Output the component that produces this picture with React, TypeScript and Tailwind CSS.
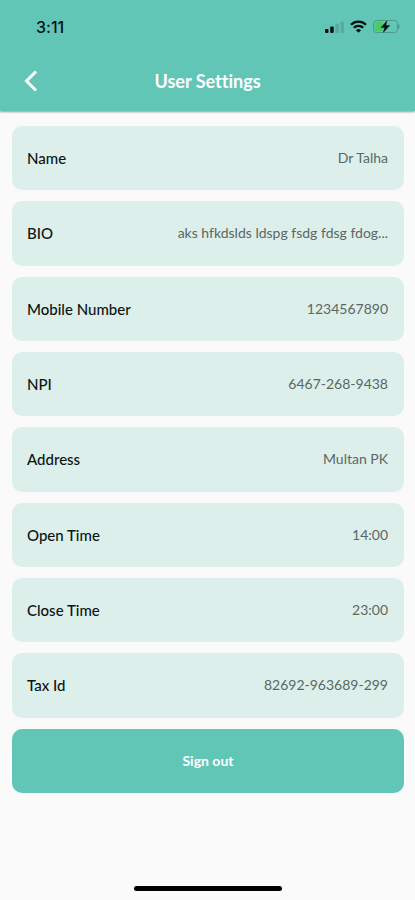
const settings = [
  { label: "Name", value: "Dr Talha" },
  { label: "BIO", value: "aks hfkdslds ldspg fsdg fdsg fdog..." },
  { label: "Mobile Number", value: "1234567890" },
  { label: "NPI", value: "6467-268-9438" },
  { label: "Address", value: "Multan PK" },
  { label: "Open Time", value: "14:00" },
  { label: "Close Time", value: "23:00" },
  { label: "Tax Id", value: "82692-963689-299" },
];

function SignalIcon() {
  return (
    <svg width="19" height="12" viewBox="0 0 19 12" aria-hidden="true">
      <rect x="0" y="8" width="3.500" height="4" rx="1" fill="#06110f" />
      <rect x="5.200" y="5.500" width="3.500" height="6.500" rx="1" fill="#06110f" />
      <rect x="10.400" y="2.800" width="3.500" height="9.200" rx="1" fill="#55ab9e" />
      <rect x="15.500" y="0.500" width="3.300" height="11.500" rx="1" fill="#55ab9e" />
    </svg>
  );
}

function WifiIcon() {
  return (
    <svg width="17" height="13" viewBox="0 0 17 13" aria-hidden="true">
      <g fill="none" stroke="#06110f" strokeWidth="2.300">
        <path d="M1 4.700a10.600 10.600 0 0 1 15 0" />
        <path d="M3.800 7.800a6.600 6.600 0 0 1 9.400 0" />
      </g>
      <path d="M8.500 12.800 5.900 10.200a3.700 3.700 0 0 1 5.200 0z" fill="#06110f" />
    </svg>
  );
}

function BatteryIcon() {
  return (
    <svg width="27" height="13" viewBox="0 0 27 13" aria-hidden="true">
      <rect x="0.500" y="0.500" width="24" height="12" rx="3" fill="none" stroke="#4b9a8e" />
      <path d="M25 4c2.200 1 2.200 4 0 5z" fill="#4b9a8e" />
      <rect x="1.800" y="1.800" width="8" height="9.400" rx="2" fill="#4ccb62" />
      <path
        d="M13.800.9 8.200 7.400h3.500l-1.300 4.900 6.200-6.700h-3.800z"
        fill="#06110f"
        stroke="#06110f"
        strokeWidth="0.500"
      />
    </svg>
  );
}

export default function App() {
  return (
    <div className="flex min-h-screen flex-col bg-[#fafafa] font-['Lato',sans-serif] [font-variant-ligatures:none]">
      <header className="bg-[#62c6b7] pb-2.5 shadow-[0_1px_2px_rgba(0,0,0,0.4)]">
        <div className="flex h-[53px] items-center justify-between pr-[15px] pl-9">
          <span className="font-['Inter',sans-serif] text-base font-medium text-[#06110f]">3:11</span>
          <div className="flex items-center gap-1.5">
            <SignalIcon />
            <WifiIcon />
            <BatteryIcon />
          </div>
        </div>
        <div className="grid h-12 grid-cols-[1fr_auto_1fr] items-center px-4 pt-2">
          <button type="button" aria-label="Back" className="flex size-8 items-center pl-2">
            <svg width="14" height="22" viewBox="0 0 14 22" fill="none" aria-hidden="true">
              <path d="M12 1.500 2.500 11 12 20.500" stroke="#fff" strokeWidth="3" />
            </svg>
          </button>
          <h1 className="text-lg font-bold text-white">User Settings</h1>
        </div>
      </header>

      <main className="flex grow flex-col gap-[11px] pt-[15px] pr-[11px] pl-3">
        <dl className="contents">
          {settings.map(({ label, value }) => (
            <div
              key={label}
              className="flex grow basis-14 items-center justify-between gap-4 rounded-[10px] bg-[#dcefeb] pr-4 pl-[15px]"
            >
              <dt className="shrink-0 text-[15px] leading-5 font-medium text-[#0c1413]">{label}</dt>
              <dd className="truncate text-sm text-[#5b6764]">{value}</dd>
            </div>
          ))}
        </dl>
        <button
          type="button"
          className="grow basis-14 rounded-[10px] bg-[#62c6b7] text-sm font-bold text-white"
        >
          Sign out
        </button>
      </main>

      <footer className="flex h-[107px] items-end justify-center pb-[9px]">
        <div className="h-[5px] w-[148px] rounded-full bg-black" />
      </footer>
    </div>
  );
}
